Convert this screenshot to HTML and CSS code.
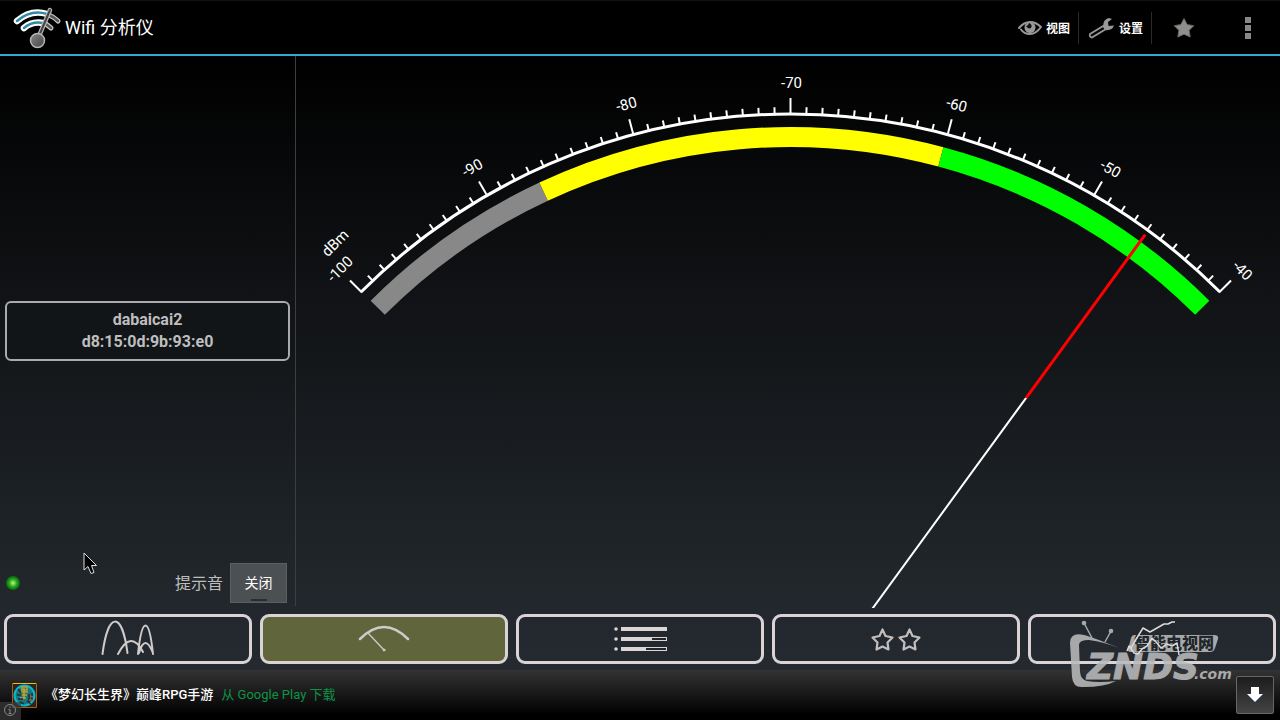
FILE: index.html
```html
<!DOCTYPE html>
<html lang="zh-CN">
<head>
<meta charset="utf-8">
<title>Wifi 分析仪</title>
<link rel="stylesheet" href="styles.css">
</head>
<body>
<div class="app">
  <header class="topbar">
    <svg class="logo" viewBox="0 0 50 44" aria-hidden="true">
      <defs><linearGradient id="ball" x1="0" y1="0" x2="1" y2="1"><stop offset="0" stop-color="#888"/><stop offset="1" stop-color="#444"/></linearGradient></defs>
      <g fill="none" stroke-linecap="round">
        <path d="M36 9Q41 11 45 15" stroke="#ccc" stroke-width="5"/>
        <path d="M36 9Q41 11 45 15" stroke="#555" stroke-width="2.500"/>
        <path d="M33 18L38 22" stroke="#ccc" stroke-width="5"/>
        <path d="M33 18L38 22" stroke="#555" stroke-width="2.500"/>
        <path d="M4 15Q18 3 34 8" stroke="#fff" stroke-width="6.500"/>
        <path d="M4 15Q18 3 34 8" stroke="#2f8ba0" stroke-width="2.500"/>
        <path d="M11 22Q19 15 30 17" stroke="#fff" stroke-width="6.500"/>
        <path d="M11 22Q19 15 30 17" stroke="#2f8ba0" stroke-width="2.500"/>
        <path d="M37 4L26 30" stroke="#b5b5b5" stroke-width="4.500"/>
        <path d="M37 4L26 30" stroke="#444" stroke-width="2"/>
      </g>
      <circle cx="24.500" cy="34.500" r="7" fill="url(#ball)" stroke="#b5b5b5" stroke-width="1.500"/>
    </svg>
    <h1 class="title">Wifi 分析仪</h1>
    <div class="actions">
      <button class="action" type="button">
        <svg width="24" height="16" viewBox="0 0 24 16" aria-hidden="true">
          <path d="M1 8Q6 2 12 2Q18 2 23 7Q18 14 12 14Q6 14 3 9.500" fill="none" stroke="#999" stroke-width="2" stroke-linecap="round" stroke-linejoin="round"/>
          <circle cx="12" cy="7.500" r="5.500" fill="#999"/>
          <path d="M11 3Q15 5 13 8Q10 9.500 8 6Q10 6.500 11 3Z" fill="#111"/>
        </svg>
        <span>视图</span>
      </button>
      <button class="action action-settings" type="button">
        <svg width="28" height="22" viewBox="0 0 28 22" aria-hidden="true">
          <path d="M17 8.500L3 17Q2 20 5 20.500L19 12" fill="#050505" stroke="#999" stroke-width="1.800" stroke-linejoin="round"/>
          <path d="M16 10Q16 2 22 1L25 2L21 5L21.500 9L27 8.500Q25 14 18 13Z" fill="#999"/>
        </svg>
        <span>设置</span>
      </button>
      <button class="action action-icon" type="button" aria-label="收藏">
        <svg width="22" height="22" viewBox="0 0 22 22" aria-hidden="true">
          <path d="M11 1.500L14.200 7.600L20.800 8.700L16.200 13.300L17.200 20L11 17.300L4.800 20L5.800 13.300L1.200 8.700L7.800 7.600Z" fill="#8f8f8f" stroke="#66665a" stroke-linejoin="round"/>
        </svg>
      </button>
      <button class="action action-icon" type="button" aria-label="更多">
        <svg width="6" height="22" viewBox="0 0 6 22" fill="#888" aria-hidden="true"><path d="M0 0h6v6H0zM0 8h6v6H0zM0 16h6v6H0z"/></svg>
      </button>
    </div>
  </header>

  <main class="main">
    <section class="side">
      <button class="network" type="button"><span>dabaicai2</span><span>d8:15:0d:9b:93:e0</span></button>
      <div class="side-foot">
        <span class="led"></span>
        <span class="beep-label" id="beep-label">提示音</span>
        <button class="toggle" type="button" aria-pressed="false" aria-labelledby="beep-label beep-state"><span id="beep-state">关闭</span></button>
      </div>
    </section>
    <section class="meter">
      <svg class="dial" viewBox="296 56 984 552" preserveAspectRatio="xMidYMin slice" role="img" aria-label="信号强度 dBm">
        <g transform="translate(790.500 721)">
          <g id="ticks"></g>
          <path d="M-429.200-429.200A607 607 0 0 1 429.200-429.200" fill="none" stroke="#fff" stroke-width="3"/>
          <g id="bands" transform="translate(-.5 -1)"></g>
          <g transform="rotate(36.100)">
            <path d="M0 0V-400" stroke="#fff" stroke-width="2"/>
            <path d="M0-400V-602" stroke="#f00" stroke-width="3"/>
          </g>
        </g>
      </svg>
    </section>
  </main>

  <nav class="tabs">
    <button class="tab" type="button" aria-label="信道图">
      <svg width="56" height="40" viewBox="0 0 56 40" fill="none" stroke="#d0cbcb" stroke-width="2" stroke-linecap="round" aria-hidden="true">
        <path d="M2.500 35C8-8 22-8 27.500 34M18 35Q31 10 43 33M38 35C42-3 49-3 53 35M39 34Q45 14 53 34"/>
      </svg>
    </button>
    <button class="tab tab-active" type="button" aria-label="信号计">
      <svg width="56" height="40" viewBox="0 0 56 40" fill="none" stroke="#d0cbcb" stroke-linecap="round" aria-hidden="true">
        <path d="M4 20Q28-4 52 20" stroke-width="2.500"/><path d="M12 14L28 31" stroke-width="1.300"/><circle cx="28" cy="31" r="1" fill="#d0cbcb"/>
      </svg>
    </button>
    <button class="tab" type="button" aria-label="接入点列表">
      <svg width="56" height="40" viewBox="0 0 56 40" fill="#dbd5d5" aria-hidden="true">
        <circle cx="4" cy="10" r="1.800"/><circle cx="4" cy="20" r="1.800"/><circle cx="4" cy="30" r="1.800"/>
        <path d="M9 8h46v4H9zM9 18h46v4H9zM9 28h46v4H9z"/>
        <path d="M40 19h14v2H40zM34 29h20v2H34z" fill="#20262a"/>
      </svg>
    </button>
    <button class="tab" type="button" aria-label="信道评级">
      <svg width="56" height="40" viewBox="0 0 56 40" fill="none" stroke="#c2bebe" stroke-width="2.200" stroke-linejoin="round" aria-hidden="true">
        <path id="rate-star" d="M14.500 10.500L17.500 17L24.500 18.500L19.500 23.500L20.500 30.500L14.500 27.500L8.500 30.500L9.500 23.500L4.500 18.500L11.500 17Z"/>
        <use href="#rate-star" x="27"/>
      </svg>
    </button>
    <button class="tab" type="button" aria-label="时间图"></button>
  </nav>

  <footer class="ad">
    <svg class="ad-icon" width="25" height="25" viewBox="0 0 25 25" aria-hidden="true">
      <path d="M.5 .5h24v24H.5z" fill="#29251f" stroke="#b55a13"/>
      <path d="M1 .5h23" stroke="#e8c410"/>
      <circle cx="12.500" cy="12.500" r="10" fill="#167783" stroke="#08b9d2" stroke-width="2"/>
      <path d="M10 4h5v3h-5zM9 9h7M10 12h5M8 15h6M12 5v11" fill="none" stroke="#c2a22b" stroke-width="1.500"/>
      <path d="M17 11v8M20 10v8M15 18l4 3M6 6l3 4M6 16h5M5 12h4M8 19l4 2" stroke="#232c2c" stroke-width="1.500"/>
      <path d="M18 13l3 1M17 17h4" stroke="#a95c1f" stroke-width="1.500"/>
    </svg>
    <span class="ad-title">《梦幻长生界》巅峰RPG手游</span>
    <a class="ad-link" href="#">从 Google Play 下载</a>
    <button class="download" type="button" aria-label="下载">
      <svg width="16" height="16" viewBox="0 0 16 16" aria-hidden="true"><path d="M4 0h8v7h4l-8 8-8-8h4z" fill="#fff"/><path d="M1 8l7 7 7-7" fill="none" stroke="#789be0" stroke-width=".8"/></svg>
    </button>
    <span class="ad-info">
      <svg width="14" height="14" viewBox="0 0 14 14" fill="none" stroke="#888" aria-hidden="true"><circle cx="7" cy="7" r="5.500"/><path d="M7 3.500v1.500M5.500 6.500H7v4M5.500 10.500h3"/></svg>
    </span>
  </footer>

  <svg class="watermark" width="170" height="74" viewBox="1066 618 170 74" aria-hidden="true">
    <g fill="#b9babb" opacity=".88">
      <path d="M1119 648Q1095 638 1084 635Q1070 632 1070 643L1072 677Q1073 688 1083 687Q1105 687 1116 681Q1099 683 1087 681Q1081 680 1080 672L1079 645Q1079 640 1089 640Q1104 642 1119 648Z"/>
      <path d="M1084 623L1092 638M1111 631L1105 642" fill="none" stroke="#b9babb" stroke-width="1.500"/>
      <circle cx="1084" cy="623" r="2.300"/><circle cx="1111" cy="631" r="2.300"/>
      <path d="M1134 635H1214Q1219 635 1218 639L1215 648Q1214 652 1210 652H1130Q1126 651 1129 646L1131 638Q1132 635 1134 635Z"/>
      <text class="wm-cn" x="1134" y="649">智能电视网</text>
      <text class="wm-main" x="1087" y="679">ZNDS</text>
      <text class="wm-com" x="1194" y="679">.com</text>
    </g>
    <g fill="none" stroke="#ded9d9" stroke-width="1.500" stroke-linejoin="round">
      <path d="M1127 651L1129 646L1131 648L1135 641L1143 628L1150 632L1164 624L1168 624L1172 622H1175"/>
      <path d="M1129 646L1134 653L1138 654L1142 649L1147 646L1152 638L1157 643L1161 648L1167 644L1172 646L1177 643L1179 655"/>
    </g>
  </svg>
  <svg class="cursor" width="16" height="24" viewBox="0 0 16 24" aria-hidden="true">
    <path d="M1 1V18L5 14.500L8 21.500L11 20.500L8.500 13.500H13.500Z" fill="#000" stroke="#ddd"/>
  </svg>
</div>
<script src="dial.js"></script>
</body>
</html>
```
FILE: styles.css
```css
* { box-sizing: border-box; }
body {
  margin: 0;
  background: #000;
  color: #fff;
  font-family: Roboto, "Noto Sans CJK SC", sans-serif;
}
button {
  margin: 0;
  padding: 0;
  border: 0;
  background: none;
  color: inherit;
  font: inherit;
}
svg { display: block; flex: none; }
.app {
  position: relative;
  display: flex;
  flex-direction: column;
  height: 100vh;
  overflow: hidden;
  background: linear-gradient(#000 8%, #111316 42%, #20262a 80%, #252a31 93%);
}
.topbar {
  display: flex;
  align-items: center;
  height: 56px;
  padding-left: 13px;
  background: #000;
  border-top: 1px solid #111;
  border-bottom: 2px solid #33a9d6;
}
.logo { width: 50px; height: 44px; }
.title {
  margin: 0 auto 0 2px;
  padding-bottom: 3px;
  font-size: 18px;
  font-weight: 400;
}
.actions { display: flex; align-items: center; }
.action {
  display: flex;
  align-items: center;
  justify-content: center;
  gap: 4px;
  height: 32px;
  padding: 0 8px;
  border-right: 1px solid #2a2a2a;
  font-size: 12px;
  font-weight: 700;
}
.action-icon { width: 64px; border: 0; }
.main { display: flex; flex: 1; min-height: 0; }
.side {
  display: grid;
  grid-template-rows: 1fr auto 1fr;
  width: 296px;
  margin-bottom: 2px;
  padding: 0 5px;
  border-right: 1px solid #3c3f42;
}
.network {
  display: flex;
  grid-row: 2;
  flex-direction: column;
  justify-content: center;
  height: 60px;
  border: 2px solid #aaa;
  border-radius: 6px;
  background: #121518;
  color: #bebebe;
  font-size: 16px;
  font-weight: 700;
  line-height: 22px;
}
.side-foot {
  display: flex;
  grid-row: 3;
  align-self: end;
  align-items: center;
  padding: 0 3px 3px 1px;
}
.led {
  width: 14px;
  height: 14px;
  margin-right: auto;
  border-radius: 50%;
  background: radial-gradient(#c8f080, #1fa81c 40%, #075c0a 75%, #06300a);
}
.beep-label {
  margin-right: 7px;
  padding-bottom: 2px;
  color: #bebebe;
  font-size: 16px;
}
.toggle {
  position: relative;
  width: 57px;
  height: 40px;
  padding-bottom: 2px;
  border: 1px solid #5c5f61;
  background: #4c5052;
  font-size: 14px;
}
.toggle::after {
  content: "";
  position: absolute;
  bottom: 1px;
  left: 50%;
  width: 16px;
  height: 2px;
  margin-left: -8px;
  background: #2c2f31;
}
.meter { flex: 1; min-width: 0; }
.dial { width: 100%; height: 100%; }
.dial text { fill: #fff; font-size: 15px; text-anchor: middle; }
.tabs {
  display: grid;
  grid-template-columns: repeat(5, 1fr);
  gap: 8px;
  padding: 6px 4px;
}
.tab {
  display: flex;
  align-items: center;
  justify-content: center;
  height: 50px;
  border: 3px solid #d9d3d4;
  border-radius: 9px;
}
.tab-active { background: #60653b; }
.ad {
  position: relative;
  display: flex;
  align-items: center;
  height: 50px;
  padding: 0 6px 0 12px;
  background: linear-gradient(#333, #000 90%);
  font-size: 13px;
}
.ad-title { margin-left: 8px; padding-bottom: 3px; font-weight: 500; }
.ad-link {
  margin-left: 8px;
  padding-bottom: 3px;
  color: #0d9446;
  text-decoration: none;
}
.download {
  display: flex;
  align-items: center;
  justify-content: center;
  width: 38px;
  height: 38px;
  margin-left: auto;
  border: 1px solid #666;
  border-radius: 2px;
  background: linear-gradient(#1c1c1c, #444);
}
.ad-info {
  position: absolute;
  bottom: 0;
  left: 0;
  padding: 1px 4px 3px 3px;
  background: rgba(60, 60, 60, .7);
}
.watermark { position: absolute; right: 44px; bottom: 28px; pointer-events: none; }
.wm-cn { fill: #20262a; font-size: 16px; font-weight: 900; }
.wm-main {
  font: italic 700 36px "DejaVu Sans", sans-serif;
  stroke: #b9babb;
  stroke-width: 1px;
}
.wm-com { font: italic 700 14px "DejaVu Sans", sans-serif; }
.cursor { position: absolute; left: 83px; top: 552px; pointer-events: none; }
```
FILE: dial.js
```js
const NS = "http://www.w3.org/2000/svg";
const DEG_PER_DBM = 1.5;

function add(parent, name, attrs, text) {
  const el = document.createElementNS(NS, name);
  for (const key in attrs) el.setAttribute(key, attrs[key]);
  if (text) el.textContent = text;
  parent.appendChild(el);
}

function point(radius, deg) {
  const a = deg * Math.PI / 180;
  return `${radius * Math.sin(a)} ${-radius * Math.cos(a)}`;
}

const ticks = document.getElementById("ticks");
for (let dbm = -100; dbm <= -40; dbm++) {
  const major = dbm % 10 === 0;
  const turn = `rotate(${(dbm + 70) * DEG_PER_DBM})`;
  add(ticks, "path", { d: `M0-606V-${major ? 623 : 614}`, stroke: "#fff", "stroke-width": 2, transform: turn });
  if (major) add(ticks, "text", { x: 1, y: -633, transform: turn }, String(dbm));
}
add(ticks, "text", { x: 16, y: -655, transform: "rotate(-45)" }, "dBm");

const bands = document.getElementById("bands");
[[-45, -25, "#888"], [-25, 15, "#ff0"], [15, 45, "#0f0"]].forEach(([from, to, color]) => {
  add(bands, "path", {
    d: `M${point(583, from)}A583 583 0 0 1 ${point(583, to)}`,
    fill: "none", stroke: color, "stroke-width": 20
  });
});
```
